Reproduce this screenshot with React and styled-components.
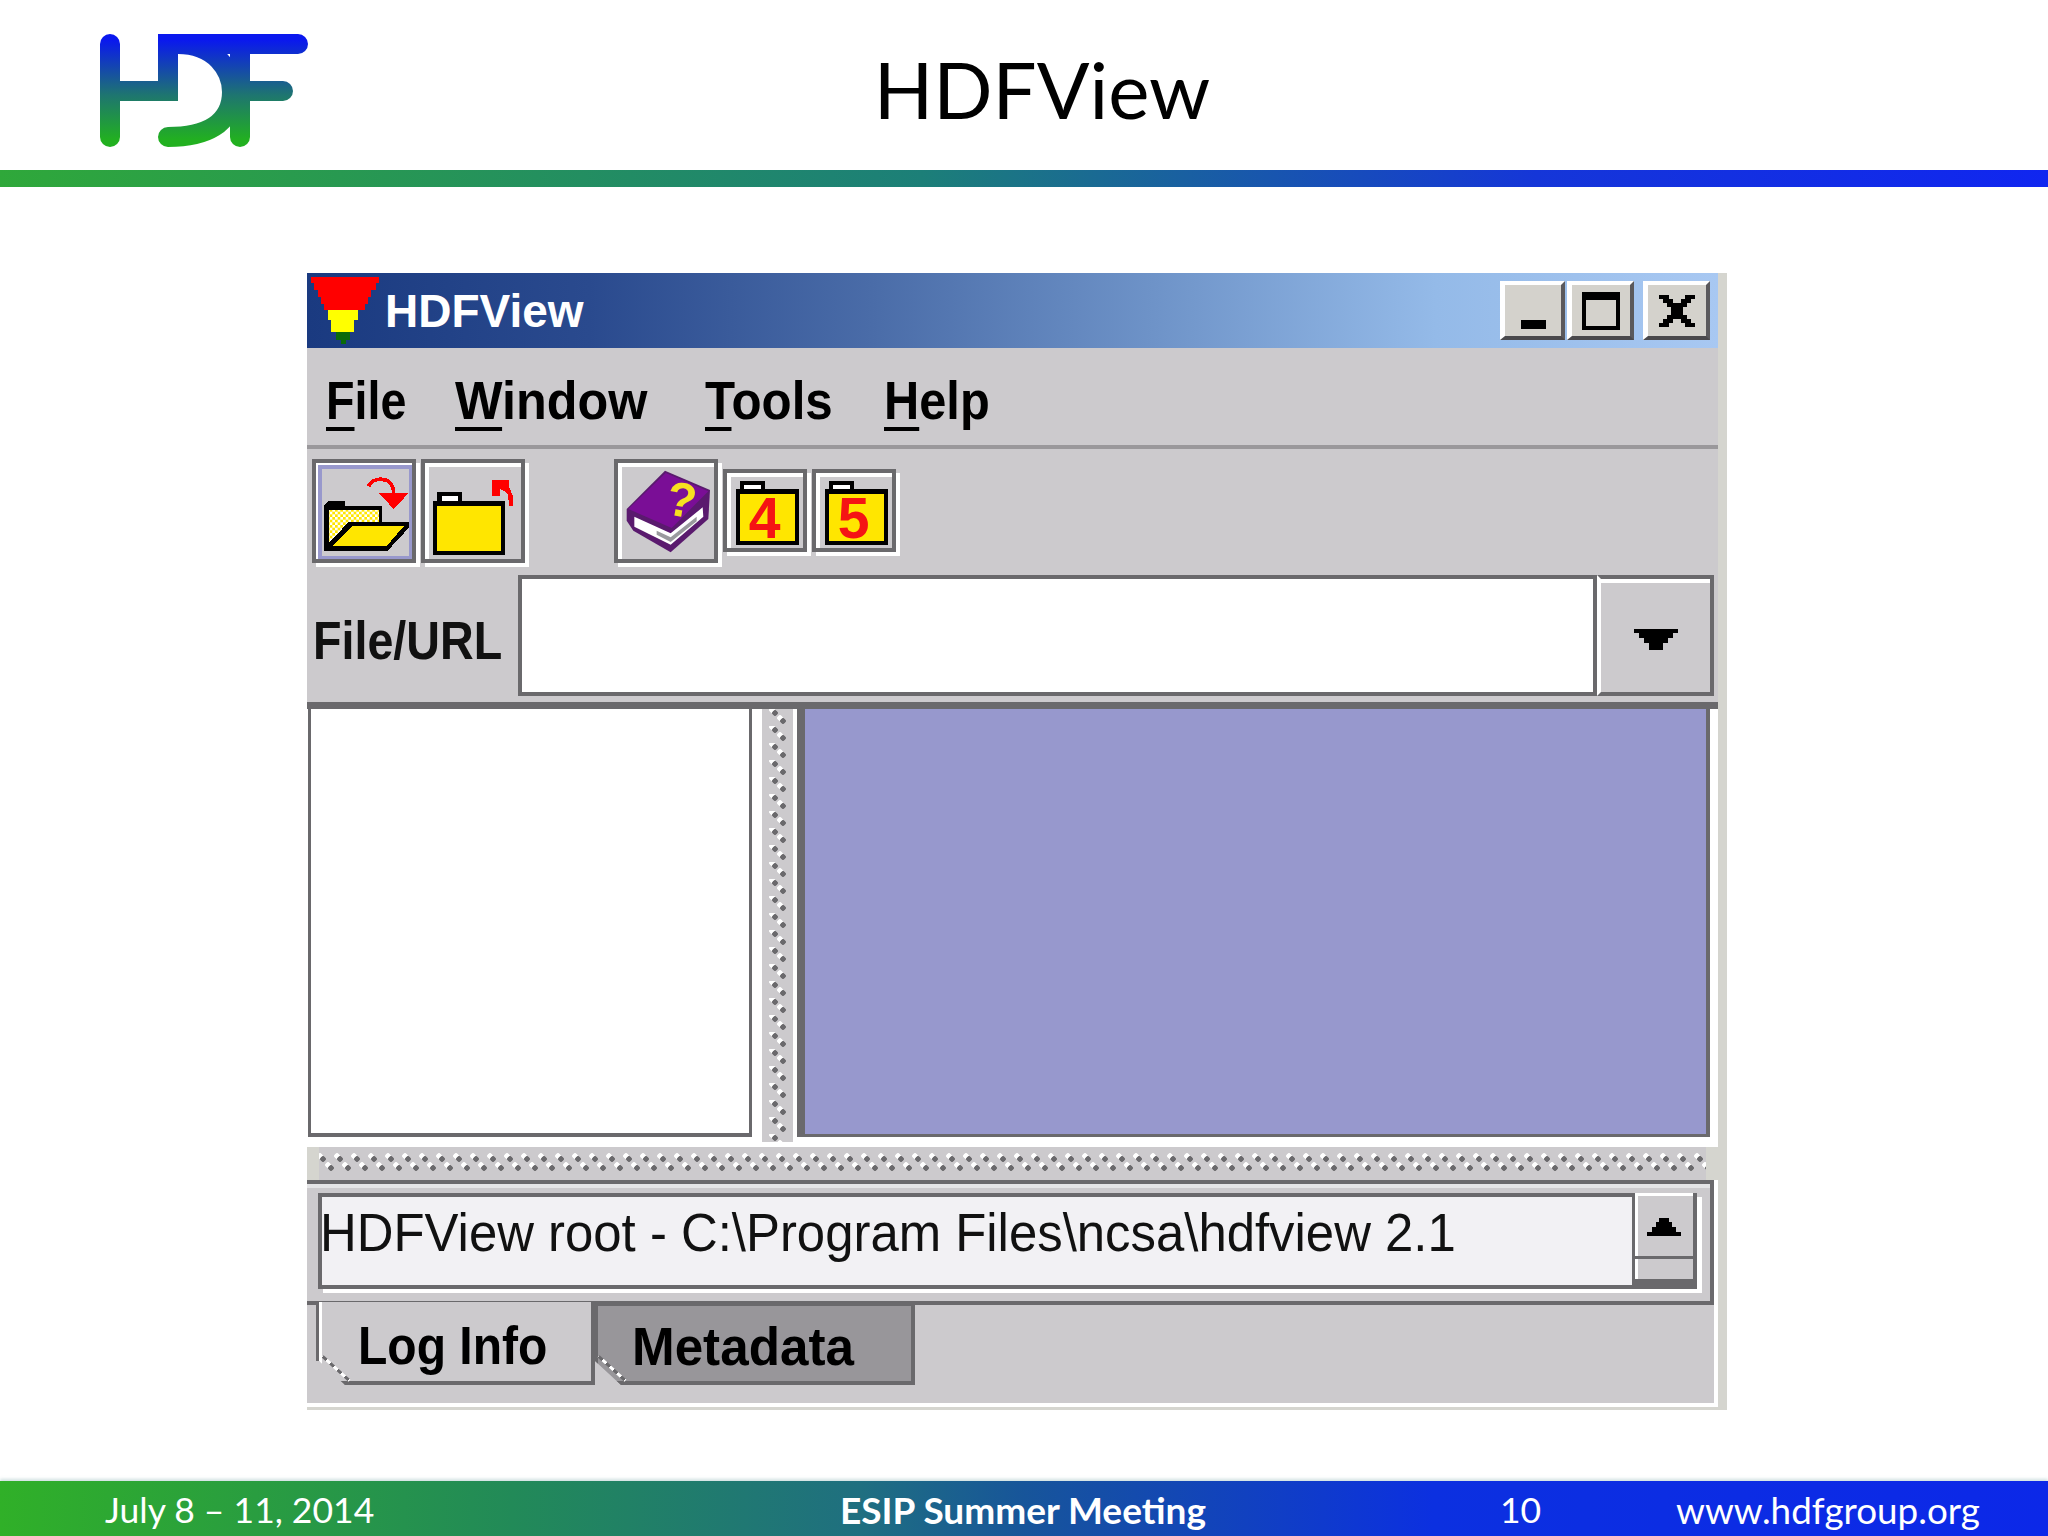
import React from 'react'
import styled, { createGlobalStyle, css } from 'styled-components'

const GlobalStyle = createGlobalStyle`
  html, body {
    margin: 0;
    padding: 0;
    background: #fff;
  }
`

const DARK = '#6a696c'
const FACE = '#cccacd'
const PIXEL_FONT = '"Liberation Sans", sans-serif'

// the old Swing font is narrower than Arial, so squeeze it sideways
const squeezed = scale => css`
  display: inline-block;
  white-space: nowrap;
  transform: scaleX(${scale});
  transform-origin: left center;
`

const Page = styled.div`
  width: 2048px;
  height: 1536px;
  display: flex;
  flex-direction: column;
  overflow: hidden;
  font-family: Lato, sans-serif;
`

const Header = styled.header`
  height: 170px;
  display: grid;
  grid-template-columns: 1fr auto 1fr;
  align-items: center;
  padding-left: 36px;
`

const Logo = styled.svg`
  display: block;
  margin-left: 54px;
`

const Title = styled.h1`
  margin: 8px 0 0;
  font-size: 78px;
  font-weight: 400;
  color: #000;
`

const Rule = styled.div`
  height: 17px;
  background: linear-gradient(90deg, #2fa83a 0%, #1c7f78 45%, #1536d8 75%, #1026f0 100%);
`

const Window = styled.section`
  width: 1411px;
  margin: 86px 0 0 307px;
  padding: 0 9px 3px 0;
  background: #d5d5cf;
  display: flex;
  flex-direction: column;
`

const TitleBar = styled.div`
  height: 75px;
  display: flex;
  align-items: center;
  padding: 0 8px 0 4px;
  background: linear-gradient(90deg, #1a3a80 0%, #2a4a8e 20%, #4a6ca8 40%, #6e93c8 60%, #94bae8 80%, #a8c8f2 100%);
`

const FunnelIcon = styled.svg`
  display: block;
`

const WindowTitle = styled.span`
  margin-left: 4px;
  font: bold 46px "Liberation Sans", sans-serif;
  color: #fff;
`

const WindowButtons = styled.div`
  margin-left: auto;
  display: flex;
`

const WindowButton = styled.div`
  width: ${p => p.$wide ? 67 : 65}px;
  height: 59px;
  margin-left: ${p => p.$gap || 0}px;
  box-sizing: border-box;
  display: flex;
  align-items: center;
  justify-content: center;
  background: #d4d2cc;
  border-style: solid;
  border-width: 4px 4px 4px 5px;
  border-color: #fff #5a595c #4a494c #fff;
`

const MenuBar = styled.nav`
  height: 97px;
  display: grid;
  grid-template-columns: 129px 250px 179px auto;
  align-items: center;
  padding-left: 19px;
  background: ${FACE};
  border-bottom: 4px solid #9a989b;
`

const MenuItem = styled.span`
  ${p => squeezed(p.$scale)}
  padding-top: 8px;
  font: bold 53px ${PIXEL_FONT};
  color: #000;
  line-height: 1;
`

const Mnemonic = styled.span`
  text-decoration: underline;
  text-decoration-thickness: 4px;
  text-underline-offset: 8px;
`

const ToolBar = styled.div`
  height: 123px;
  display: flex;
  align-items: center;
  padding: 0 0 3px 5px;
  background: ${FACE};
`

const ToolButton = styled.div`
  width: ${p => p.$small ? 84 : 104}px;
  height: ${p => p.$small ? 83 : 104}px;
  margin-left: ${p => p.$gap || 0}px;
  box-sizing: border-box;
  flex: none;
  border: 4px solid ${DARK};
  box-shadow: 4px 4px 0 #fff, inset 4px 4px 0 #fff;
  background: ${FACE};
  svg {
    display: block;
  }
`

const UrlRow = styled.div`
  height: 127px;
  display: flex;
  background: ${FACE};
`

const UrlLabel = styled.label`
  ${squeezed(0.88)}
  width: 205px;
  margin-left: 6px;
  padding-top: 4px;
  align-self: center;
  font: bold 53px ${PIXEL_FONT};
  color: #111;
`

const UrlInput = styled.div`
  width: 1079px;
  height: 121px;
  box-sizing: border-box;
  background: #fff;
  border: 4px solid ${DARK};
`

const UrlDrop = styled.div`
  width: 117px;
  height: 121px;
  box-sizing: border-box;
  padding-top: 8px;
  display: flex;
  align-items: center;
  justify-content: center;
  background: ${FACE};
  border-top: 4px solid ${DARK};
  border-right: 4px solid ${DARK};
  border-bottom: 4px solid ${DARK};
  border-left: 4px solid #fff;
  box-shadow: inset 0 4px 0 #fff;
`

const Split = styled.div`
  height: 445px;
  display: flex;
  background: #fff;
  box-sizing: border-box;
  border-top: 7px solid ${DARK};
`

const TreePane = styled.div`
  width: 444px;
  height: 428px;
  margin-left: 1px;
  box-sizing: border-box;
  background: #fff;
  border-left: 3px solid ${DARK};
  border-right: 3px solid ${DARK};
  border-bottom: 4px solid ${DARK};
`

const VerticalGrip = styled.div`
  width: 31px;
  margin-left: 10px;
  height: 433px;
  background-color: ${FACE};
  background-image:
    radial-gradient(circle at 13px 4px, ${DARK} 2.5px, transparent 3px),
    radial-gradient(circle at 21px 12px, ${DARK} 2.5px, transparent 3px),
    radial-gradient(circle at 10px 1px, #fff 2.5px, transparent 3px),
    radial-gradient(circle at 18px 9px, #fff 2.5px, transparent 3px);
  background-size: 31px 17px;
`

const ContentPane = styled.div`
  width: 901px;
  height: 425px;
  margin-left: 12px;
  background: #9798cd;
  border-right: 4px solid ${DARK};
  border-bottom: 3px solid ${DARK};
  box-shadow: -8px 0 0 ${DARK};
`

const HorizontalGrip = styled.div`
  height: 33px;
  background-color: ${FACE};
  background-image:
    radial-gradient(circle at 6px 12px, ${DARK} 2.5px, transparent 3px),
    radial-gradient(circle at 14px 21px, ${DARK} 2.5px, transparent 3px),
    radial-gradient(circle at 3px 9px, #fff 2.5px, transparent 3px),
    radial-gradient(circle at 11px 18px, #fff 2.5px, transparent 3px);
  background-size: 17px 33px;
  background-position: 10px 0;
  background-clip: content-box;
  padding: 0 12px;
  box-sizing: border-box;
`

const LogSection = styled.div`
  height: 125px;
  margin-right: 4px;
  box-sizing: border-box;
  padding: 9px 13px 12px 11px;
  background: ${FACE};
  border-top: 4px solid ${DARK};
  border-right: 4px solid ${DARK};
  border-bottom: 4px solid ${DARK};
  box-shadow: inset 0 4px 0 #e4e4e6, 4px 0 0 #fff;
`

const LogBox = styled.div`
  height: 96px;
  display: flex;
  box-sizing: border-box;
  background: #f2f1f4;
  border: 4px solid ${DARK};
  border-right: 0;
  box-shadow: 5px 4px 0 #fff;
`

const LogText = styled.div`
  flex: 1;
  font: 53px/56px ${PIXEL_FONT};
  padding-top: 8px;
  color: #111;
  margin-left: -2px;
`

const LogLine = styled.span`
  ${squeezed(0.96)}
`

const ScrollBar = styled.div`
  width: 65px;
  flex: none;
  display: flex;
  flex-direction: column;
  box-sizing: border-box;
  background: ${FACE};
  border-left: 3px solid ${DARK};
  border-right: 4px solid ${DARK};
  box-shadow: inset 3px 3px 0 #fff;
  margin-top: -4px;
  padding-top: 4px;
`

const ScrollUp = styled.div`
  height: 62px;
  display: flex;
  align-items: center;
  justify-content: center;
  box-sizing: border-box;
  border-bottom: 3px solid ${DARK};
`

const ScrollRest = styled.div`
  flex: 1;
  border-bottom: 6px solid ${DARK};
`

const TabBar = styled.div`
  height: 98px;
  display: flex;
  align-items: flex-start;
  padding-left: 12px;
  background: ${FACE};
  border-bottom: 4px solid #fff;
  border-right: 4px solid #fff;
`

const Tab = styled.div`
  position: relative;
  width: ${p => p.$w}px;
  height: 83px;
  margin-top: -3px;
  box-sizing: border-box;
  display: flex;
  align-items: center;
  padding: ${p => p.$selected ? 8 : 5}px 0 0 ${p => p.$pad}px;
  background: ${p => p.$selected ? FACE : '#98969a'};
  border-right: 4px solid ${DARK};
  border-bottom: 4px solid ${DARK};
  border-top: ${p => p.$selected ? 0 : `4px solid ${DARK}`};
  border-left: ${p => p.$selected ? '3px solid #fff' : `3px solid ${DARK}`};
  box-shadow: ${p => p.$selected ? `-3px 0 0 ${DARK}` : 'none'};
  clip-path: polygon(-4px 0, 100% 0, 100% 100%, 26px 100%, 0 calc(100% - 24px), -4px calc(100% - 24px));
`

const TabLabel = styled.span`
  ${p => squeezed(p.$scale)}
  font: bold 53px ${PIXEL_FONT};
  color: #000;
`

const TabNotch = styled.span`
  position: absolute;
  left: -4px;
  bottom: 11px;
  width: 36px;
  height: 3px;
  transform: rotate(42deg);
  background: repeating-linear-gradient(90deg, ${DARK} 0 5px, #fff 5px 10px);
`

const Footer = styled.footer`
  margin-top: auto;
  height: 55px;
  display: grid;
  grid-template-columns: 735px 660px 176px auto;
  align-items: center;
  padding: 2px 0 0 105px;
  box-sizing: border-box;
  background: linear-gradient(90deg, #30b028 0%, #228a58 25%, #1f6f80 42%, #17559a 50%, #0c30e0 70%, #0c28e8 100%);
  box-shadow: 0 -2px 3px rgba(120, 170, 170, 0.35);
  color: #fff;
  font-size: 35.5px;
`

const FooterBold = styled.span`
  font-weight: 700;
  font-size: 37px;
`

const FooterUrl = styled.span`
  font-size: 36.8px;
`

const HdfLogo = () => (
  <Logo width="230" height="170" viewBox="90 0 230 170">
    <defs>
      <linearGradient id="hdf" gradientUnits="userSpaceOnUse" x1="0" y1="40" x2="0" y2="140">
        <stop offset="0" stopColor="#0a18ee" />
        <stop offset="0.55" stopColor="#1e7570" />
        <stop offset="1" stopColor="#22b020" />
      </linearGradient>
    </defs>
    <g fill="none" stroke="url(#hdf)" strokeWidth="20" strokeLinecap="round">
      <path d="M110 44V137" />
      <path d="M110 91H168V44H298" />
      <path d="M168 137C205 137 232 125 232 92C232 70 215 44 178 44" />
      <path d="M240 44V137" />
      <path d="M240 91H283" />
    </g>
  </Logo>
)

const Funnel = () => (
  <FunnelIcon width="70" height="68" viewBox="0 0 70 68" shapeRendering="crispEdges">
    <polygon fill="#ff0000" points="0,0 68,0 68,6 65,6 65,13 60,13 60,20 57,20 57,27 54,27 54,33 13,33 13,27 10,27 10,20 7,20 7,13 3,13 3,6 0,6" />
    <polygon fill="#ffff00" points="17,33 47,33 47,43 43,43 43,55 20,55 20,43 17,43" />
    <polygon fill="#0a6a0a" points="25,55 39,55 39,63 35,63 35,67 30,67 30,63 25,63" />
  </FunnelIcon>
)

const MinIcon = () => (
  <svg width="25" height="9" viewBox="0 0 25 9" style={{ marginTop: 28 }}>
    <rect width="25" height="9" fill="#000" />
  </svg>
)

const MaxIcon = () => (
  <svg width="38" height="38" viewBox="0 0 38 38">
    <path d="M0 0H38V38H0ZM4 8V34H34V8Z" fill="#000" fillRule="evenodd" />
  </svg>
)

const CloseIcon = () => (
  <svg width="36" height="32" viewBox="0 0 36 32" shapeRendering="crispEdges">
    <path fill="#000" d="M0 0H10V4H14V8H22V4H26V0H36V4H32V8H28V12H24V20H28V24H32V28H36V32H26V28H22V24H14V28H10V32H0V28H4V24H8V20H12V12H8V8H4V4H0Z" />
  </svg>
)

const OpenFolderIcon = () => (
  <svg width="96" height="96" viewBox="47 590 288 288" shapeRendering="crispEdges">
    <defs>
      <pattern id="check" width="16" height="16" patternUnits="userSpaceOnUse">
        <rect width="16" height="16" fill="#fff" />
        <rect width="8" height="8" fill="#ffe600" />
        <rect x="8" y="8" width="8" height="8" fill="#ffe600" />
      </pattern>
    </defs>
    <rect x="60" y="603" width="272" height="272" fill="none" stroke="#9898cc" strokeWidth="12" />
    <path d="M205 660C212 632 280 625 280 680" fill="none" stroke="#ff0000" strokeWidth="11" />
    <polygon fill="#ff0000" points="235,680 325,680 280,728" />
    <polygon fill="#000" points="72,718 85,703 135,703 135,718 245,718 245,767 325,767 325,785 262,853 72,853" />
    <polygon fill="url(#check)" points="85,730 235,730 235,767 145,767 85,830" />
    <polygon fill="#ffe600" points="95,840 155,780 310,780 258,840" />
  </svg>
)

const ClosedFolderIcon = () => (
  <svg width="96" height="96" viewBox="375 590 288 288" shapeRendering="crispEdges">
    <rect x="400" y="703" width="215" height="162" fill="#000" />
    <rect x="412" y="678" width="75" height="30" fill="#000" />
    <rect x="425" y="690" width="50" height="13" fill="#fff" />
    <rect x="412" y="718" width="191" height="135" fill="#ffe600" />
    <polygon fill="#ff0000" points="575,640 628,640 628,665 640,690 640,718 628,718 622,680 600,668 600,690 575,690" />
  </svg>
)

const BookIcon = () => (
  <svg width="96" height="96" viewBox="54 67 288 288">
    <polygon fill="#5a1a6e" points="80,205 195,90 330,148 325,235 212,335 100,270 80,240" />
    <polygon fill="#fff" points="103,228 212,278 308,200 310,228 212,312 103,258" />
    <polygon fill="#9a9a9e" points="170,270 212,290 290,228 290,242 212,304 170,282" />
    <polygon fill="#7a0e96" points="85,205 197,97 325,152 215,262" />
    <text x="245" y="228" textAnchor="middle" fontFamily="Liberation Sans, sans-serif" fontWeight="700" fontSize="145" fill="#f6e020" transform="rotate(10 245 178)">?</text>
  </svg>
)

const DigitFolderIcon = ({ digit }) => (
  <svg width="76" height="80" viewBox="382 104 226 238" shapeRendering="crispEdges">
    <rect x="408" y="153" width="189" height="164" fill="#000" />
    <rect x="420" y="128" width="75" height="30" fill="#000" />
    <rect x="432" y="140" width="51" height="13" fill="#fff" />
    <rect x="420" y="167" width="165" height="138" fill="#ffe600" />
    <text x="494" y="298" textAnchor="middle" fontFamily="Liberation Sans, sans-serif" fontWeight="700" fontSize="170" fill="#f51414">{digit}</text>
  </svg>
)

const DownArrow = () => (
  <svg width="44" height="21" viewBox="0 0 44 21" shapeRendering="crispEdges">
    <polygon fill="#000" points="0,0 44,0 44,4 39,4 39,9 34,9 34,14 29,14 29,21 15,21 15,14 10,14 10,9 5,9 5,4 0,4" />
  </svg>
)

const UpArrow = () => (
  <svg width="34" height="18" viewBox="0 0 34 18" shapeRendering="crispEdges">
    <polygon fill="#000" points="0,18 34,18 34,14 29,14 29,9 25,9 25,4 22,4 22,0 12,0 12,4 9,4 9,9 5,9 5,14 0,14" />
  </svg>
)

const App = () => (
  <>
    <GlobalStyle />
    <Page>
      <Header>
        <HdfLogo />
        <Title>HDFView</Title>
      </Header>
      <Rule />

      <Window>
        <TitleBar>
          <Funnel />
          <WindowTitle>HDFView</WindowTitle>
          <WindowButtons>
            <WindowButton><MinIcon /></WindowButton>
            <WindowButton $wide $gap={2}><MaxIcon /></WindowButton>
            <WindowButton $wide $gap={9}><CloseIcon /></WindowButton>
          </WindowButtons>
        </TitleBar>

        <MenuBar>
          <MenuItem $scale={0.88}><Mnemonic>F</Mnemonic>ile</MenuItem>
          <MenuItem $scale={0.95}><Mnemonic>W</Mnemonic>indow</MenuItem>
          <MenuItem $scale={0.93}><Mnemonic>T</Mnemonic>ools</MenuItem>
          <MenuItem $scale={0.92}><Mnemonic>H</Mnemonic>elp</MenuItem>
        </MenuBar>

        <ToolBar>
          <ToolButton><OpenFolderIcon /></ToolButton>
          <ToolButton $gap={5}><ClosedFolderIcon /></ToolButton>
          <ToolButton $gap={89}><BookIcon /></ToolButton>
          <ToolButton $small $gap={5}><DigitFolderIcon digit="4" /></ToolButton>
          <ToolButton $small $gap={5}><DigitFolderIcon digit="5" /></ToolButton>
        </ToolBar>

        <UrlRow>
          <UrlLabel>File/URL</UrlLabel>
          <UrlInput />
          <UrlDrop><DownArrow /></UrlDrop>
        </UrlRow>

        <Split>
          <TreePane />
          <VerticalGrip />
          <ContentPane />
        </Split>

        <HorizontalGrip />

        <LogSection>
          <LogBox>
            <LogText><LogLine>HDFView root - C:\Program Files\ncsa\hdfview 2.1</LogLine></LogText>
            <ScrollBar>
              <ScrollUp><UpArrow /></ScrollUp>
              <ScrollRest />
            </ScrollBar>
          </LogBox>
        </LogSection>

        <TabBar>
          <Tab $selected $w={276} $pad={36}><TabLabel $scale={0.906}>Log Info</TabLabel><TabNotch /></Tab>
          <Tab $w={320} $pad={34}><TabLabel $scale={0.966}>Metadata</TabLabel><TabNotch /></Tab>
        </TabBar>
      </Window>

      <Footer>
        <span>July 8 – 11, 2014</span>
        <FooterBold>ESIP Summer Meeting</FooterBold>
        <span>10</span>
        <FooterUrl>www.hdfgroup.org</FooterUrl>
      </Footer>
    </Page>
  </>
)

export default App
